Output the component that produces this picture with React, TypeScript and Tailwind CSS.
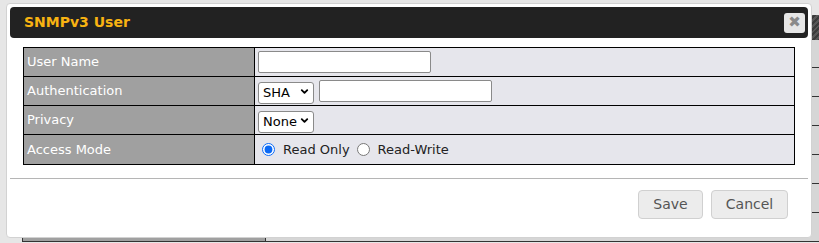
import React, { useState } from "react";
import { ChevronDown } from "lucide-react";

const font = "font-['DejaVu_Sans',Verdana,sans-serif]";

const Select: React.FC<{ options: string[]; value: string; width: string }> = ({ options, value, width }) => {
  const [v, setV] = useState(value);
  return (
    <div className={`relative ${width} h-[22px]`}>
      <select
        value={v}
        onChange={(e) => setV(e.target.value)}
        className={`h-full w-full appearance-none rounded-[3px] border border-[#8a8a8a] bg-white pl-[4px] text-[13px] text-black ${font}`}
      >
        {options.map((o) => (
          <option key={o}>{o}</option>
        ))}
      </select>
      <ChevronDown
        size={11}
        strokeWidth={4}
        className="pointer-events-none absolute right-[4px] top-[6px] text-black"
      />
    </div>
  );
};

const Row: React.FC<{ label: string; children: React.ReactNode; last?: boolean }> = ({ label, children, last }) => (
  <div className={`flex h-[29px] ${last ? "" : "border-b border-black"}`}>
    <div className="flex w-[231px] items-center border-r border-black bg-[#a0a0a0] pl-[3px] text-[13px] text-white">
      {label}
    </div>
    <div className="flex flex-1 items-center gap-[5px] bg-[#e6e6ec] pl-[3px]">{children}</div>
  </div>
);

const BgRow: React.FC = () => (
  <div className="flex h-[29px] border-b border-[#333]">
    <div className="w-[243px] border-l border-[#333] bg-[#a0a0a0]" />
    <div className="flex-1 border-l border-[#333] bg-[#d6d6d6]" />
  </div>
);

export default function App() {
  const [mode, setMode] = useState("ro");
  return (
    <div className={`relative h-[243px] w-[819px] overflow-hidden bg-[#e6e6e6] ${font}`}>
      {/* page behind the dialog */}
      <div className="pl-[22px] pt-[15px]">
        <div className="h-[25px] bg-[repeating-linear-gradient(135deg,#3b3b3b_0px,#3b3b3b_2px,#575757_2px,#575757_4px)]" />
        <div className="h-[28px] border-b border-[#333] bg-[#d6d6d6]" />
        <BgRow />
        <BgRow />
        <BgRow />
        <BgRow />
        <BgRow />
        <BgRow />
      </div>

      {/* dialog */}
      <div className="absolute left-[6px] top-[3px] h-[235px] w-[806px] rounded-[4px] border border-[#d2d2d2] bg-white p-[3px]">
        <div className="flex h-[31px] items-center justify-between rounded-[4px] bg-[#222222] pl-[14px] pr-[3px]">
          <span className="text-[14px] font-bold text-[#f8b312]">SNMPv3 User</span>
          <button
            type="button"
            className="flex h-[20px] w-[21px] items-center justify-center rounded-[3px] bg-[#e6e6e6] text-[15px] font-bold leading-none text-[#8a8a8a]"
          >
            ✖
          </button>
        </div>

        <div className="mx-[13px] mt-[9px] border border-black">
          <Row label="User Name">
            <input type="text" className="h-[22px] w-[173px] rounded-[2px] border border-[#8a8a8a] bg-white" />
          </Row>
          <Row label="Authentication">
            <Select options={["SHA", "MD5"]} value="SHA" width="w-[56px]" />
            <input type="text" className="h-[22px] w-[173px] rounded-[2px] border border-[#8a8a8a] bg-white" />
          </Row>
          <Row label="Privacy">
            <Select options={["None", "DES", "AES"]} value="None" width="w-[56px]" />
          </Row>
          <Row label="Access Mode" last>
            <label className="ml-[4px] flex items-center gap-[8px] text-[13px] text-[#222]">
              <input
                type="radio"
                name="mode"
                checked={mode === "ro"}
                onChange={() => setMode("ro")}
                className="m-0 h-[13px] w-[13px] accent-[#0b69f5]"
              />
              Read Only
            </label>
            <label className="ml-[2px] flex items-center gap-[8px] text-[13px] text-[#222]">
              <input
                type="radio"
                name="mode"
                checked={mode === "rw"}
                onChange={() => setMode("rw")}
                className="m-0 h-[13px] w-[13px] accent-[#0b69f5]"
              />
              Read-Write
            </label>
          </Row>
        </div>

        <div className="mt-[13px] flex justify-end gap-[8px] border-t border-[#b5b5b5] pr-[20px] pt-[11px]">
          <button
            type="button"
            className="h-[29px] w-[65px] rounded-[4px] border border-[#d0d0d0] bg-[#ececec] text-[14px] text-[#555]"
          >
            Save
          </button>
          <button
            type="button"
            className="h-[29px] w-[77px] rounded-[4px] border border-[#d0d0d0] bg-[#ececec] text-[14px] text-[#555]"
          >
            Cancel
          </button>
        </div>
      </div>
    </div>
  );
}
